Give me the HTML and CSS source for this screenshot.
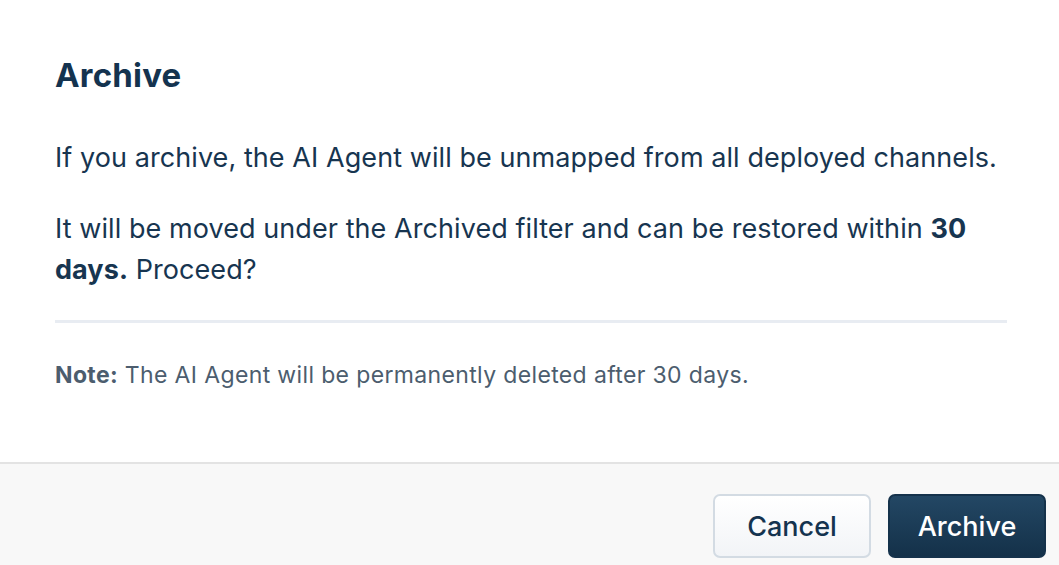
FILE: index.html
```html
<!DOCTYPE html>
<html lang="en">
<head>
<meta charset="utf-8">
<title>Archive</title>
<link rel="stylesheet" href="styles.css">
</head>
<body>
<div class="dialog">
  <div class="content">
    <h1 class="title">Archive</h1>
    <p class="text">If you archive, the AI Agent will be unmapped from all deployed channels.</p>
    <p class="text">It will be moved under the Archived filter and can be restored within <strong>30 days.</strong> Proceed?</p>
    <hr class="divider">
    <p class="note"><strong>Note:</strong> The AI Agent will be permanently deleted after 30 days.</p>
  </div>
  <div class="footer">
    <button class="btn btn-secondary">Cancel</button>
    <button class="btn btn-primary">Archive</button>
  </div>
</div>
</body>
</html>
```
FILE: styles.css
```css
html, body {
  margin: 0;
  padding: 0;
  background: #ffffff;
}
body {
  font-family: Inter, "Noto Sans", "Liberation Sans", sans-serif;
  color: #173550;
}
.dialog {
  width: 1059px;
  height: 565px;
  display: flex;
  flex-direction: column;
}
.content {
  padding: 53px 52px 0 55px;
  height: 409px;
}
.title {
  margin: 0 0 40px;
  font-size: 33px;
  font-weight: 650;
  line-height: 44px;
  letter-spacing: 0.2px;
  color: #14334f;
}
.text {
  margin: 0 0 30px;
  font-size: 27px;
  line-height: 41px;
  letter-spacing: 0.07px;
}
.text strong {
  font-weight: 700;
}
.divider {
  border: none;
  height: 3px;
  background: #e8ecf2;
  margin: 0 0 37px;
}
.note {
  margin: 0;
  font-size: 23px;
  line-height: 30px;
  letter-spacing: 0.36px;
  color: #4c5d6e;
}
.note strong {
  font-weight: 700;
}
.footer {
  flex: 1;
  background: #f8f8f8;
  border-top: 2px solid #e3e3e3;
  display: flex;
  justify-content: flex-end;
  align-items: flex-start;
  gap: 17px;
  padding: 30px 13px 0 0;
}
.btn {
  width: 158px;
  height: 64px;
  border-radius: 7px;
  font-family: inherit;
  font-size: 27px;
  font-weight: 500;
  cursor: pointer;
}
.btn-secondary {
  background: linear-gradient(#ffffff, #f2f4f7);
  border: 2px solid #d3dbe3;
  color: #14334f;
}
.btn-primary {
  background: linear-gradient(#234764, #143149);
  border: 2px solid #15324b;
  color: #ffffff;
}
```
